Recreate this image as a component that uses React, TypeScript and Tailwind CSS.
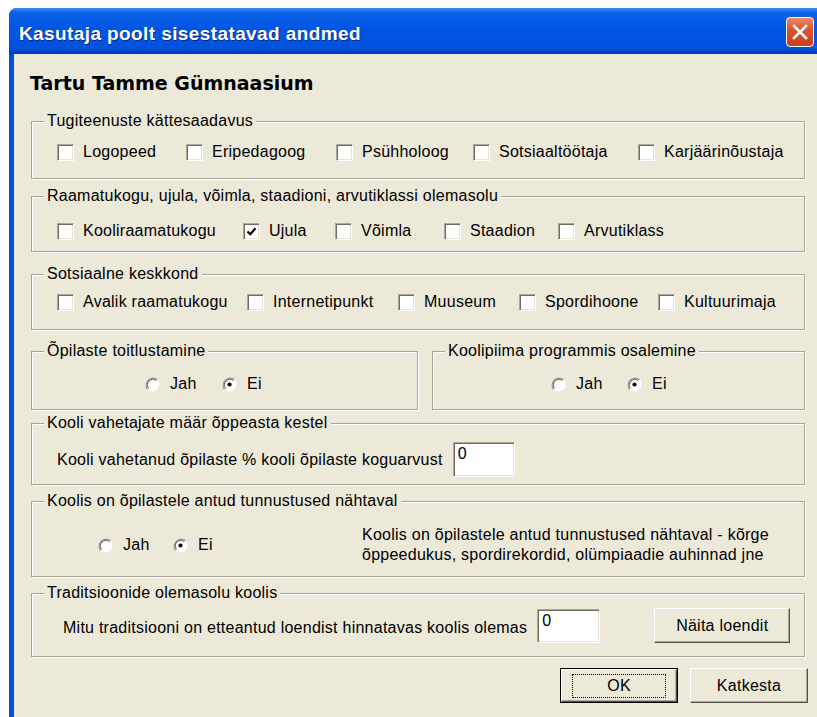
import type { ReactNode } from 'react';

const BODY_FONT = "font-['Liberation_Sans',Arial,sans-serif]";

function GroupBox({
  label,
  className,
  children,
}: {
  label: string;
  className: string;
  children: ReactNode;
}) {
  return (
    <div
      className={`border border-[#a6a498] shadow-[inset_1px_1px_0_#fff,1px_1px_0_#fff] ${className}`}
    >
      <div className="-mt-[10px] ml-[12px] w-fit bg-[#ece9d8] px-[3px] text-[16px] leading-[18px] text-black">
        {label}
      </div>
      {children}
    </div>
  );
}

function CheckBox({ label, checked = false, width }: { label: string; checked?: boolean; width?: string }) {
  return (
    <div className={`flex items-center gap-[9px] ${width ?? ''}`}>
      <span className="flex h-[17px] w-[17px] shrink-0 items-center justify-center border border-t-[#aca899] border-l-[#aca899] border-r-white border-b-white bg-white shadow-[inset_1px_1px_0_#6f6d63,inset_-1px_-1px_0_#e6e3d6]">
        {checked && (
          <svg width="11" height="11" viewBox="0 0 11 11">
            <path d="M1.5 5.5 L4.2 8.2 L9.5 2.3" fill="none" stroke="#000" strokeWidth="2.2" />
          </svg>
        )}
      </span>
      <span className="whitespace-nowrap text-[16px] leading-[18px]">{label}</span>
    </div>
  );
}

function Radio({ label, checked = false, width }: { label: string; checked?: boolean; width?: string }) {
  return (
    <div className={`flex items-center gap-[10px] ${width ?? ''}`}>
      <svg width="15" height="15" viewBox="0 0 15 15" className="shrink-0">
        <circle cx="7.5" cy="7.5" r="7" fill="#fff" />
        <path d="M12.4 2.6 A7 7 0 0 0 2.6 12.4" fill="none" stroke="#9c9a8e" strokeWidth="1.4" />
        <path d="M11.3 3.7 A5.4 5.4 0 0 0 3.7 11.3" fill="none" stroke="#55534b" strokeWidth="1" />
        {checked && <circle cx="7.5" cy="7.5" r="2.1" fill="#000" />}
      </svg>
      <span className="whitespace-nowrap text-[16px] leading-[18px]">{label}</span>
    </div>
  );
}

function TextField({ value, className }: { value: string; className: string }) {
  return (
    <div
      className={`border border-t-[#aca899] border-l-[#aca899] border-r-white border-b-white bg-white pl-[4px] pt-[2px] text-[16px] leading-[18px] shadow-[inset_1px_1px_0_#6f6d63,inset_-1px_-1px_0_#e6e3d6] ${className}`}
    >
      {value}
    </div>
  );
}

function Button({ label, isDefault = false, className }: { label: string; isDefault?: boolean; className: string }) {
  if (isDefault) {
    return (
      <div className={`border border-black ${className}`}>
        <div className="flex h-full w-full items-center justify-center border border-t-white border-l-white border-r-[#55534b] border-b-[#55534b] bg-[#ece9d8] shadow-[inset_-1px_-1px_0_#aca899]">
          <div className="flex h-[24px] w-[94px] items-center justify-center border border-dotted border-black text-[16px] leading-[18px]">
            {label}
          </div>
        </div>
      </div>
    );
  }
  return (
    <div
      className={`flex items-center justify-center border border-t-white border-l-white border-r-[#55534b] border-b-[#55534b] bg-[#ece9d8] text-[16px] leading-[18px] shadow-[inset_-1px_-1px_0_#aca899] ${className}`}
    >
      {label}
    </div>
  );
}

export default function App() {
  return (
    <div className={`h-[717px] w-[817px] overflow-hidden bg-white pl-[9px] pt-[8px] tracking-[0.25px] text-black ${BODY_FONT}`}>
      <div className="flex h-[709px] w-[818px] flex-col overflow-hidden rounded-t-[8px] bg-[#0050dc]">
        {/* title bar */}
        <div className="flex h-[46px] shrink-0 items-start justify-between bg-[linear-gradient(to_bottom,#3d8ef8_0%,#0a60e8_10%,#0056e3_45%,#0052df_85%,#003bbd_100%)] pl-[10px] pr-[13px]">
          <span className="mt-[15px] text-[19px] leading-[22px] font-bold tracking-[0.4px] text-white [text-shadow:1px_1px_0_#0b2c8a]">
            Kasutaja poolt sisestatavad andmed
          </span>
          <div className="mt-[9px] flex h-[30px] w-[28px] items-center justify-center rounded-[4px] border border-white bg-[linear-gradient(to_bottom,#ec8a66_0%,#dd5630_40%,#c9401c_100%)]">
            <svg width="16" height="16" viewBox="0 0 16 16">
              <path d="M2 2 L14 14 M14 2 L2 14" stroke="#fff" strokeWidth="2.6" strokeLinecap="square" />
            </svg>
          </div>
        </div>

        {/* dialog body */}
        <div className="ml-[5px] flex flex-1 flex-col bg-[#ece9d8] pl-[17px]">
          <div className="mt-[18px] -ml-[1px] font-['DejaVu_Sans',Verdana,sans-serif] text-[19px] leading-[22px] font-bold tracking-normal">
            Tartu Tamme Gümnaasium
          </div>

          <GroupBox label="Tugiteenuste kättesaadavus" className="mt-[27px] h-[58px] w-[774px]">
            <div className="flex items-center pl-[25px] pt-[13px]">
              <CheckBox label="Logopeed" width="w-[129px]" />
              <CheckBox label="Eripedagoog" width="w-[150px]" />
              <CheckBox label="Psühholoog" width="w-[137px]" />
              <CheckBox label="Sotsiaaltöötaja" width="w-[165px]" />
              <CheckBox label="Karjäärinõustaja" />
            </div>
          </GroupBox>

          <GroupBox
            label="Raamatukogu, ujula, võimla, staadioni, arvutiklassi olemasolu"
            className="mt-[17px] h-[56px] w-[774px]"
          >
            <div className="flex items-center pl-[25px] pt-[17px]">
              <CheckBox label="Kooliraamatukogu" width="w-[186px]" />
              <CheckBox label="Ujula" checked width="w-[92px]" />
              <CheckBox label="Võimla" width="w-[109px]" />
              <CheckBox label="Staadion" width="w-[114px]" />
              <CheckBox label="Arvutiklass" />
            </div>
          </GroupBox>

          <GroupBox label="Sotsiaalne keskkond" className="mt-[22px] h-[56px] w-[774px]">
            <div className="flex items-center pl-[25px] pt-[10px]">
              <CheckBox label="Avalik raamatukogu" width="w-[190px]" />
              <CheckBox label="Internetipunkt" width="w-[151px]" />
              <CheckBox label="Muuseum" width="w-[121px]" />
              <CheckBox label="Spordihoone" width="w-[139px]" />
              <CheckBox label="Kultuurimaja" />
            </div>
          </GroupBox>

          <div className="mt-[21px] flex w-[774px] gap-[14px]">
            <GroupBox label="Õpilaste toitlustamine" className="h-[59px] w-[387px]">
              <div className="flex items-center pl-[113px] pt-[15px]">
                <Radio label="Jah" width="w-[77px]" />
                <Radio label="Ei" checked />
              </div>
            </GroupBox>
            <GroupBox label="Koolipiima programmis osalemine" className="h-[59px] w-[373px]">
              <div className="flex items-center pl-[118px] pt-[15px]">
                <Radio label="Jah" width="w-[76px]" />
                <Radio label="Ei" checked />
              </div>
            </GroupBox>
          </div>

          <GroupBox label="Kooli vahetajate määr õppeasta kestel" className="mt-[13px] h-[62px] w-[774px]">
            <div className="flex items-center gap-[10px] pl-[25px] pt-[10px]">
              <span className="text-[16px] leading-[18px]">Kooli vahetanud õpilaste % kooli õpilaste koguarvust</span>
              <TextField value="0" className="h-[35px] w-[62px]" />
            </div>
          </GroupBox>

          <GroupBox label="Koolis on õpilastele antud tunnustused nähtaval" className="mt-[16px] h-[76px] w-[774px]">
            <div className="flex items-center pt-[15px]">
              <div className="flex w-[330px] items-center pl-[66px]">
                <Radio label="Jah" width="w-[75px]" />
                <Radio label="Ei" checked />
              </div>
              <div className="text-[16px] leading-[20px]">
                Koolis on õpilastele antud tunnustused nähtaval - kõrge
                <br />
                õppeedukus, spordirekordid, olümpiaadie auhinnad jne
              </div>
            </div>
          </GroupBox>

          <GroupBox label="Traditsioonide olemasolu koolis" className="mt-[16px] h-[64px] w-[774px]">
            <div className="flex items-center pl-[31px] pt-[6px]">
              <span className="pt-[4px] text-[16px] leading-[18px]">
                Mitu traditsiooni on etteantud loendist hinnatavas koolis olemas
              </span>
              <TextField value="0" className="ml-[10px] h-[34px] w-[63px]" />
              <Button label="Näita loendit" className="ml-[54px] h-[35px] w-[136px]" />
            </div>
          </GroupBox>

          <div className="mt-[11px] flex w-[777px] justify-end gap-[12px]">
            <Button label="OK" isDefault className="h-[35px] w-[118px]" />
            <Button label="Katkesta" className="h-[35px] w-[118px]" />
          </div>
        </div>
      </div>
    </div>
  );
}
